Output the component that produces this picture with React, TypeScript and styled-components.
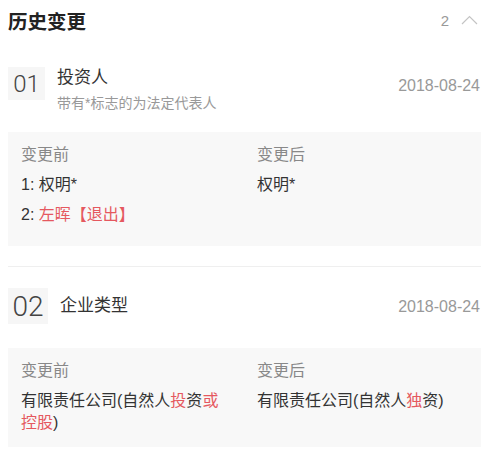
import styled, { createGlobalStyle } from 'styled-components';

const GlobalStyle = createGlobalStyle`
  body {
    margin: 0;
    background: #fff;
    font-family: "Liberation Sans", "Noto Sans CJK SC", sans-serif;
    color: #333;
  }
`;

const Page = styled.div`
  padding: 0 14px 0 8px;
`;

const Header = styled.header`
  display: flex;
  align-items: center;
  justify-content: space-between;
  height: 40px;
`;

const Title = styled.h1`
  margin: 0;
  font-size: 19.5px;
  font-weight: 700;
  color: #222;
`;

const Count = styled.div`
  display: flex;
  align-items: center;
  gap: 12px;
  font-size: 15px;
  color: #999;
  padding-right: 3px;
`;

const Item = styled.section<{ $top: number }>`
  padding-top: ${(p) => p.$top}px;
`;

const ItemHead = styled.div`
  display: flex;
  align-items: center;
`;

const NumBox = styled.div<{ $big?: boolean }>`
  align-self: flex-start;
  width: ${(p) => (p.$big ? 40 : 37)}px;
  height: ${(p) => (p.$big ? 36 : 33)}px;
  background: #f6f6f6;
  display: flex;
  align-items: center;
  justify-content: center;
  font-family: Roboto, "Liberation Sans", sans-serif;
  font-size: ${(p) => (p.$big ? 28 : 24)}px;
  font-weight: 300;
  color: #444;
  flex-shrink: 0;
`;

const HeadText = styled.div`
  flex: 1;
  margin-left: 12px;
`;

const ItemTitle = styled.div`
  font-size: 17px;
  line-height: 22px;
  color: #333;
`;

const Sub = styled.div`
  margin-top: 4px;
  font-size: 14px;
  line-height: 20px;
  color: #999;
`;

const Date = styled.div`
  align-self: flex-start;
  margin-top: 10px;
  font-size: 16px;
  line-height: 18px;
  color: #999;
  padding-right: 1px;
`;

const ChangeBox = styled.div<{ $top: number; $bottom: number }>`
  margin-top: ${(p) => p.$top}px;
  background: #f8f8f8;
  padding: 12px 13px ${(p) => p.$bottom}px;
  display: grid;
  grid-template-columns: 236px 1fr;
`;

const Col = styled.div<{ $wrap?: number }>`
  padding-right: ${(p) => p.$wrap ?? 0}px;
`;

const Label = styled.div`
  font-size: 16px;
  line-height: 22px;
  color: #888;
`;

const Value = styled.div`
  margin-top: 8px;
  font-size: 16px;
  line-height: 22px;
  color: #333;
`;

const Red = styled.span`
  color: #e5585f;
`;

const Divider = styled.hr`
  margin: 20px 0 0;
  border: 0;
  border-top: 1px solid #efefef;
`;

function ChevronUp() {
  return (
    <svg width="17" height="10" viewBox="0 0 17 10" fill="none">
      <path d="M1 9 L8.5 1.5 L16 9" stroke="#c4c4c4" strokeWidth="1.2" />
    </svg>
  );
}

export default function App() {
  return (
    <Page>
      <GlobalStyle />
      <Header>
        <Title>历史变更</Title>
        <Count>
          2
          <ChevronUp />
        </Count>
      </Header>

      <Item $top={27}>
        <ItemHead>
          <NumBox>01</NumBox>
          <HeadText>
            <ItemTitle>投资人</ItemTitle>
            <Sub>带有*标志的为法定代表人</Sub>
          </HeadText>
          <Date>2018-08-24</Date>
        </ItemHead>
        <ChangeBox $top={19} $bottom={20}>
          <Col>
            <Label>变更前</Label>
            <Value>1: 权明*</Value>
            <Value>
              2: <Red>左晖【退出】</Red>
            </Value>
          </Col>
          <Col>
            <Label>变更后</Label>
            <Value>权明*</Value>
          </Col>
        </ChangeBox>
      </Item>

      <Divider />

      <Item $top={21}>
        <ItemHead>
          <NumBox $big>02</NumBox>
          <HeadText>
            <ItemTitle>企业类型</ItemTitle>
          </HeadText>
          <Date>2018-08-24</Date>
        </ItemHead>
        <ChangeBox $top={24} $bottom={13}>
          <Col $wrap={30}>
            <Label>变更前</Label>
            <Value>
              有限责任公司(自然人<Red>投</Red>资<Red>或</Red>
              <br />
              <Red>控股</Red>)
            </Value>
          </Col>
          <Col>
            <Label>变更后</Label>
            <Value>
              有限责任公司(自然人<Red>独</Red>资)
            </Value>
          </Col>
        </ChangeBox>
      </Item>
    </Page>
  );
}
